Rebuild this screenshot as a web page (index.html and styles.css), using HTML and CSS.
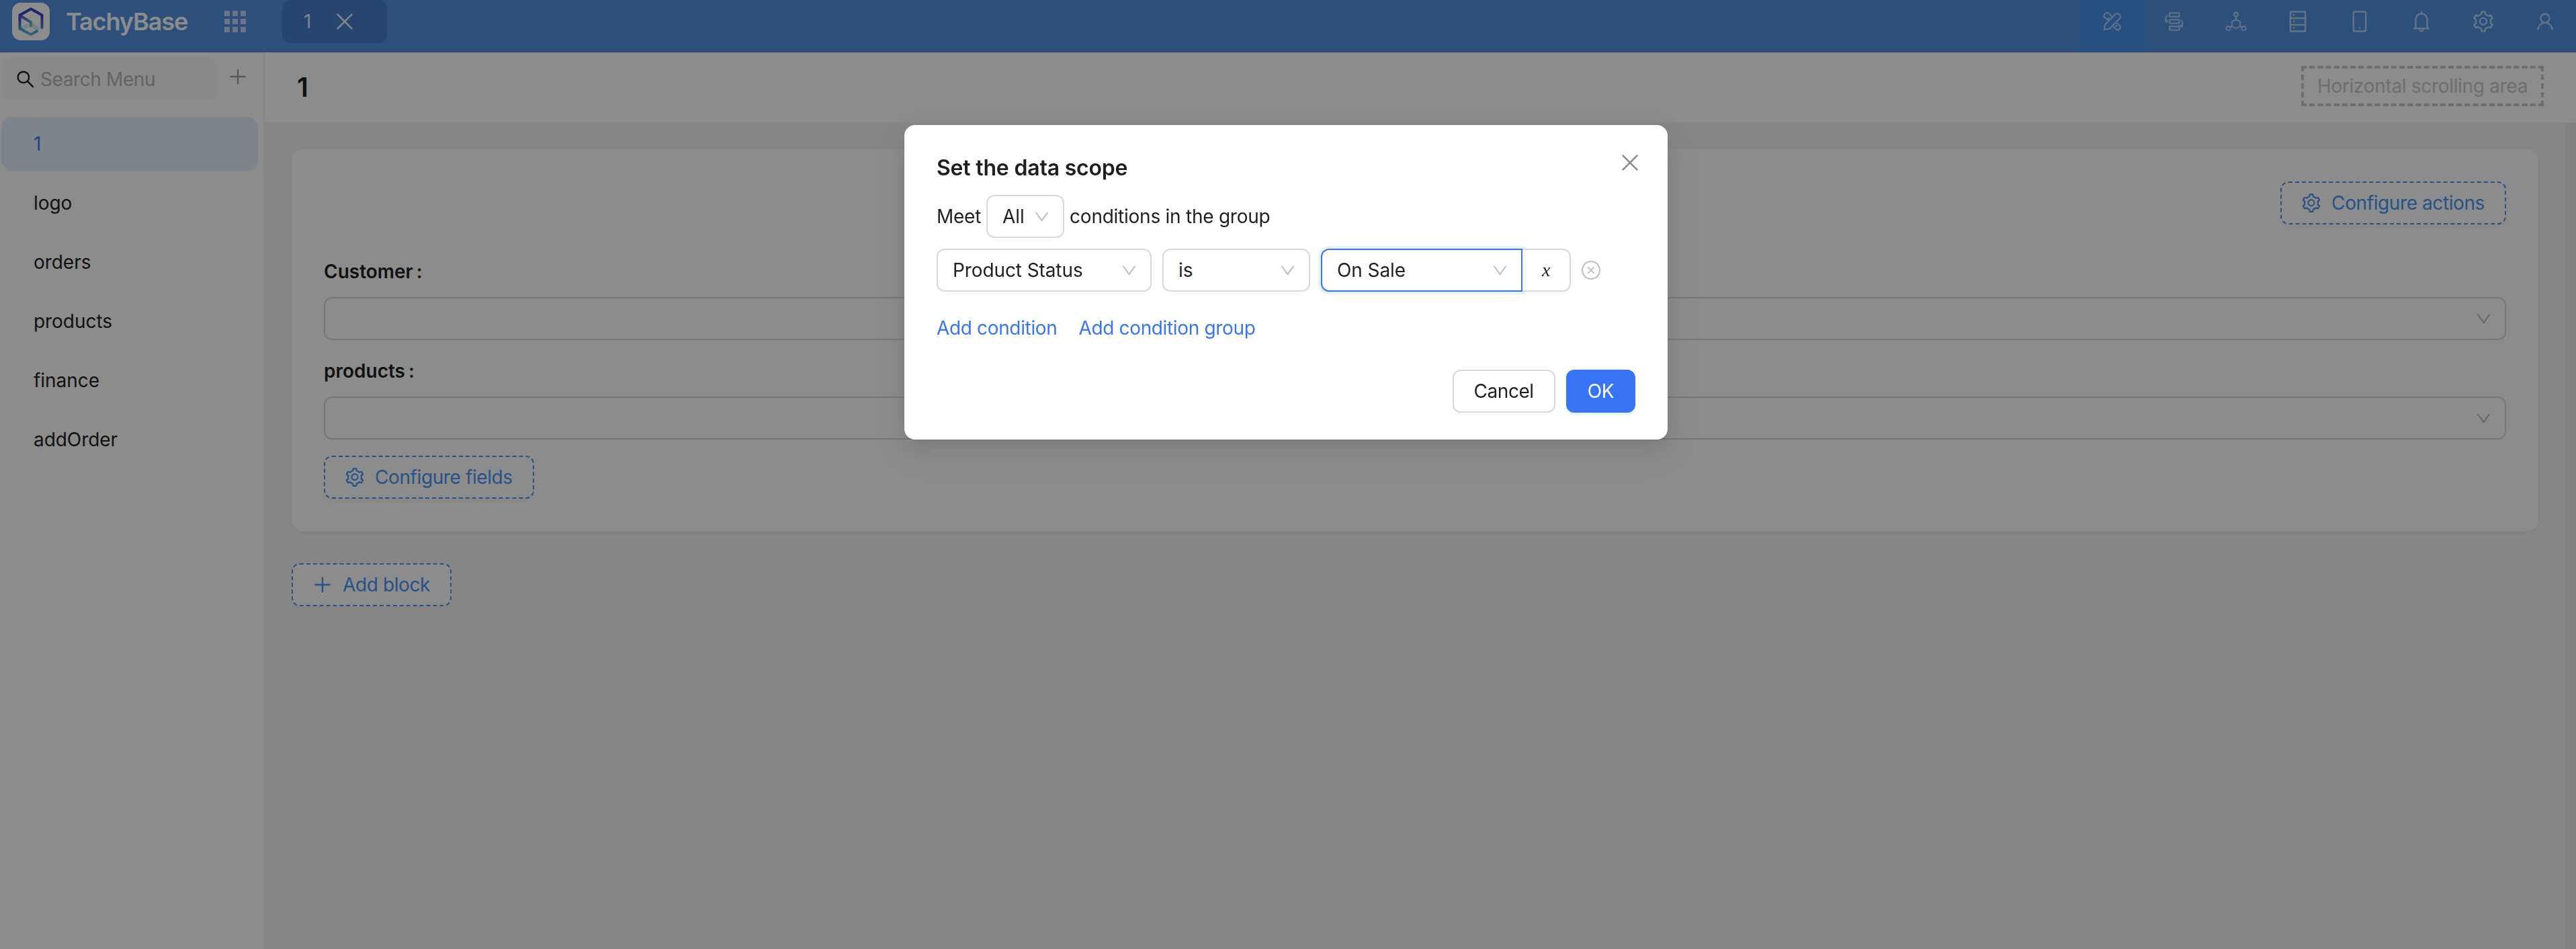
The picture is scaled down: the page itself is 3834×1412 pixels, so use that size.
FILE: index.html
```html
<!DOCTYPE html>
<html lang="en">
<head>
<meta charset="utf-8">
<title>TachyBase</title>
<link rel="stylesheet" href="styles.css">
</head>
<body>
<svg class="sprite" aria-hidden="true">
  <symbol id="i-down" viewBox="0 0 1024 1024"><path d="M884 256h-75c-5.1 0-9.9 2.5-12.9 6.6L512 654.2 227.9 262.6c-3-4.1-7.8-6.6-12.9-6.6h-75c-6.5 0-10.3 7.4-6.5 12.7l352.6 486.1c12.8 17.6 39 17.6 51.7 0l352.6-486.1c3.9-5.3.1-12.7-6.4-12.7z"/></symbol>
  <symbol id="i-plus" viewBox="0 0 1024 1024"><path d="M482 152h60q8 0 8 8v704q0 8-8 8h-60q-8 0-8-8V160q0-8 8-8z"/><path d="M152 474h720q8 0 8 8v60q0 8-8 8H152q-8 0-8-8v-60q0-8 8-8z"/></symbol>
  <symbol id="i-close" viewBox="0 0 1024 1024"><path d="M195 195l634 634M829 195L195 829" fill="none" stroke="currentColor" stroke-width="76"/></symbol>
  <symbol id="i-search" viewBox="0 0 1024 1024"><path d="M909.6 854.5L649.9 594.8C690.2 542.7 712 479 712 412c0-80.2-31.3-155.4-87.9-212.1-56.6-56.7-132-87.9-212.1-87.9s-155.5 31.3-212.1 87.9C143.2 256.5 112 331.8 112 412c0 80.1 31.3 155.5 87.9 212.1C256.5 680.8 331.8 712 412 712c67 0 130.6-21.8 182.7-62l259.7 259.6a8.2 8.2 0 0011.6 0l43.6-43.5a8.2 8.2 0 000-11.6zM570.4 570.4C528 612.7 471.8 636 412 636s-116-23.3-158.4-65.6C211.3 528 188 471.8 188 412s23.3-116.1 65.6-158.4C296 211.3 352.2 188 412 188s116.1 23.2 158.4 65.6S636 352.2 636 412s-23.3 116.1-65.6 158.4z"/></symbol>
  <symbol id="i-setting" viewBox="0 0 1024 1024"><path d="M924.8 625.7l-65.5-56c3.1-19 4.7-38.4 4.7-57.8s-1.6-38.8-4.7-57.8l65.5-56a32.03 32.03 0 009.3-35.2l-.9-2.6a443.74 443.74 0 00-79.7-137.9l-1.8-2.1a32.12 32.12 0 00-35.1-9.5l-81.3 28.9c-30-24.6-63.5-44-99.7-57.6l-15.7-85a32.05 32.05 0 00-25.8-25.7l-2.7-.5c-52.1-9.4-106.9-9.4-159 0l-2.7.5a32.05 32.05 0 00-25.8 25.7l-15.8 85.4a351.86 351.86 0 00-99 57.4l-81.9-29.1a32 32 0 00-35.1 9.5l-1.8 2.1a446.02 446.02 0 00-79.7 137.9l-.9 2.6c-4.5 12.5-.8 26.5 9.3 35.2l66.3 56.6c-3.1 18.8-4.6 38-4.6 57.1 0 19.2 1.5 38.4 4.6 57.1L99 625.5a32.03 32.03 0 00-9.3 35.2l.9 2.6c18.1 50.4 44.9 96.9 79.7 137.9l1.8 2.1a32.12 32.12 0 0035.1 9.5l81.9-29.1c29.8 24.5 63.1 43.9 99 57.4l15.8 85.4a32.05 32.05 0 0025.8 25.7l2.7.5a449.4 449.4 0 00159 0l2.7-.5a32.05 32.05 0 0025.8-25.7l15.7-85a350 350 0 0099.7-57.6l81.3 28.9a32 32 0 0035.1-9.5l1.8-2.1c34.8-41.1 61.6-87.5 79.7-137.9l.9-2.6c4.5-12.3.8-26.3-9.3-35zM788.3 465.9c2.5 15.1 3.8 30.6 3.8 46.1s-1.3 31-3.8 46.1l-6.6 40.1 74.7 63.9a370.03 370.03 0 01-42.6 73.6L721 702.8l-31.4 25.8c-23.9 19.6-50.5 35-79.3 45.8l-38.1 14.3-17.9 97a377.5 377.5 0 01-85 0l-17.9-97.2-37.8-14.5c-28.5-10.8-55-26.2-78.7-45.7l-31.4-25.9-93.4 33.2c-17-22.9-31.2-47.6-42.6-73.6l75.5-64.5-6.5-40c-2.4-14.9-3.7-30.3-3.7-45.5 0-15.3 1.2-30.6 3.7-45.5l6.5-40-75.5-64.5c11.3-26.1 25.6-50.7 42.6-73.6l93.4 33.2 31.4-25.9c23.7-19.5 50.2-34.9 78.7-45.7l37.9-14.3 17.9-97.2c28.1-3.2 56.8-3.2 85 0l17.9 97 38.1 14.3c28.7 10.8 55.4 26.2 79.3 45.8l31.4 25.8 92.8-32.9c17 22.9 31.2 47.6 42.6 73.6L781.8 426l6.5 39.9zM512 326c-97.2 0-176 78.8-176 176s78.800 176 176 176 176-78.800 176-176-78.800-176-176-176zm79.200 255.200A111.600 111.600 0 01512 614c-29.900 0-58-11.700-79.200-32.800A111.600 111.600 0 01400 502c0-29.900 11.700-58 32.800-79.200C454 401.600 482.100 390 512 390c29.900 0 58 11.600 79.200 32.800A111.600 111.600 0 01624 502c0 29.900-11.700 58-32.800 79.200z"/></symbol>
</svg>

<div class="app">
  <header class="topbar">
    <div class="brand">
      <svg class="logo" viewBox="0 0 56 56">
        <defs>
          <linearGradient id="lg-hex" gradientUnits="userSpaceOnUse" x1="0" y1="8" x2="0" y2="49"><stop offset="0" stop-color="#2a48c4"/><stop offset=".35" stop-color="#4b3fc6"/><stop offset=".62" stop-color="#3f7fd0"/><stop offset="1" stop-color="#5cc6d6"/></linearGradient>
          <linearGradient id="lg-arm" gradientUnits="userSpaceOnUse" x1="12" y1="19" x2="28" y2="36"><stop offset="0" stop-color="#4b4fcc"/><stop offset="1" stop-color="#62cdd2"/></linearGradient>
        </defs>
        <rect width="56" height="56" rx="13" fill="#fff"/>
        <path d="M28 28l14 10-7 4-9-8-9 7-7-4z" fill="#62cdd2" opacity=".28"/>
        <path d="M38.500 41.500L28 47.500 11.500 38.500V18.500L28 9.300l16.500 9.200V39" stroke="url(#lg-hex)" stroke-width="4"/>
        <path d="M12 19.500l16 9.500v7.500" stroke="url(#lg-arm)" stroke-width="4"/>
      </svg>
      <span class="brand-name">TachyBase</span>
    </div>
    <svg class="apps" viewBox="0 0 32 32"><path d="M0 0h8v8H0zM12 0h8v8h-8zM24 0h8v8h-8zM0 12h8v8H0zM12 12h8v8h-8zM24 12h8v8h-8zM0 24h8v8H0zM12 24h8v8h-8zM24 24h8v8h-8z"/></svg>
    <div class="tab"><span>1</span><svg class="ic36"><use href="#i-close"/></svg></div>
    <nav class="tools">
      <a class="tool on"><svg class="ic28 line" viewBox="0 0 28 28"><path d="M1.800 26.200L3.300 18.300 18.600 3a3.400 3.400 0 014.800 0l1.600 1.600a3.400 3.400 0 010 4.800L9.700 24.700zM9.300 12.500L2.700 8.200a3.800 3.800 0 01-.6-5L4 1.900a3.800 3.800 0 015 .5l5 5.200M7.600 10.400l2.200-2.200M18.200 14l6.900 6.500a3.500 3.500 0 010 4.200l-1.400 1.200a3.500 3.500 0 01-4.400-.3l-5.200-5.500M18.500 21.600l2.400-2.400"/></svg></a>
      <a class="tool"><svg class="ic28 line" viewBox="0 0 28 28"><path d="M7 1.200h14.500v5.600H7zM7 21.200h14.500v5.600H7zM9.500 11.200H19a2.800 2.800 0 010 5.600H9.500a2.800 2.800 0 010-5.600zM4.500 5C.5 7 .5 11 2.500 14.500M.3 12.500l2.500 2.600 1.600-3.200M23.500 11.500c3.500 2 4 6.500 1.500 10M27 19.500l-2.500 2.800-1.500-3.600"/></svg></a>
      <a class="tool"><svg class="ic32 line" viewBox="0 0 32 32"><circle cx="16" cy="5.500" r="3"/><circle cx="4.500" cy="26" r="3"/><circle cx="27.500" cy="26" r="3"/><path d="M16 8.500v4.200M10.300 23l-3.200 1.700M21.700 23l3.200 1.700M16 12.800l6 3.400v6.800l-6 3.500-6-3.500v-6.800z"/></svg></a>
      <a class="tool"><svg class="ic36" viewBox="0 0 1024 1024"><path d="M832 64H192c-17.700 0-32 14.300-32 32v832c0 17.700 14.300 32 32 32h640c17.700 0 32-14.300 32-32V96c0-17.700-14.300-32-32-32zm-600 72h560v208H232V136zm560 480H232V408h560v208zm0 272H232V680h560v208zM304 240a40 40 0 1080 0 40 40 0 10-80 0zm0 272a40 40 0 1080 0 40 40 0 10-80 0zm0 272a40 40 0 1080 0 40 40 0 10-80 0z"/></svg></a>
      <a class="tool"><svg class="ic36" viewBox="0 0 1024 1024"><path d="M744 62H280c-35.300 0-64 28.700-64 64v768c0 35.300 28.700 64 64 64h464c35.300 0 64-28.700 64-64V126c0-35.300-28.700-64-64-64zm-8 824H288V134h448v752zM472 784a40 40 0 1080 0 40 40 0 10-80 0z"/></svg></a>
      <a class="tool"><svg class="ic36" viewBox="0 0 1024 1024"><path d="M816 768h-24V428c0-141.100-104.300-257.800-240-277.200V112c0-22.100-17.900-40-40-40s-40 17.900-40 40v38.800C336.300 170.200 232 286.900 232 428v340h-24c-17.700 0-32 14.300-32 32v32c0 4.400 3.600 8 8 8h216c0 61.800 50.200 112 112 112s112-50.200 112-112h216c4.400 0 8-3.600 8-8v-32c0-17.700-14.300-32-32-32zM512 888c-26.500 0-48-21.500-48-48h96c0 26.500-21.500 48-48 48zM304 768V428c0-55.600 21.600-107.800 60.900-147.100S456.400 220 512 220c55.600 0 107.800 21.600 147.100 60.900S720 372.400 720 428v340H304z"/></svg></a>
      <a class="tool"><svg class="ic36"><use href="#i-setting"/></svg></a>
      <a class="tool"><svg class="ic32" viewBox="0 0 1024 1024"><path d="M858.500 763.600a374 374 0 00-80.600-119.500 375.630 375.630 0 00-119.500-80.600c-.4-.2-.8-.3-1.200-.5C719.500 518 760 444.700 760 362c0-137-111-248-248-248S264 225 264 362c0 82.700 40.500 156 102.800 201.100-.4.2-.8.3-1.200.5-44.800 18.900-85 46-119.500 80.600a375.630 375.630 0 00-80.600 119.500A371.700 371.700 0 00136 901.800a8 8 0 008 8.200h60c4.400 0 7.900-3.500 8-7.800 2-77.200 33-149.500 87.800-204.300 56.700-56.700 132-87.900 212.200-87.900s155.500 31.200 212.200 87.900C779 752.700 810 825 812 902.200c.1 4.400 3.600 7.800 8 7.800h60a8 8 0 008-8.200c-1-47.800-10.900-94.300-29.500-138.200zM512 534c-45.900 0-89.100-17.900-121.600-50.400S340 407.900 340 362c0-45.900 17.900-89.100 50.400-121.600S466.100 190 512 190s89.100 17.900 121.600 50.400S684 316.100 684 362c0 45.900-17.900 89.100-50.400 121.600S557.900 534 512 534z"/></svg></a>
    </nav>
  </header>

  <div class="layout">
    <aside class="sidebar">
      <div class="search-row">
        <div class="search"><svg class="ic32"><use href="#i-search"/></svg><span class="ph">Search Menu</span></div>
        <svg class="ic32 add-menu"><use href="#i-plus"/></svg>
      </div>
      <ul class="menu">
        <li class="item active"><span>1</span></li>
        <li class="item"><span>logo</span></li>
        <li class="item"><span>orders</span></li>
        <li class="item"><span>products</span></li>
        <li class="item"><span>finance</span></li>
        <li class="item"><span>addOrder</span></li>
      </ul>
    </aside>

    <main class="main">
      <div class="page-head">
        <h1 class="page-title">1</h1>
        <div class="scroll-area"><span>Horizontal scrolling area</span></div>
      </div>
      <div class="scroller">
        <div class="content">
          <section class="card">
            <div class="actions"><button class="btn dashed"><svg class="ic32"><use href="#i-setting"/></svg><span>Configure actions</span></button></div>
            <div class="field">
              <div class="label"><span>Customer</span><span class="colon">:</span></div>
              <div class="select wide"><svg class="arrow"><use href="#i-down"/></svg></div>
            </div>
            <div class="field">
              <div class="label"><span>products</span><span class="colon">:</span></div>
              <div class="select wide"><svg class="arrow"><use href="#i-down"/></svg></div>
            </div>
            <button class="btn dashed"><svg class="ic32"><use href="#i-setting"/></svg><span>Configure fields</span></button>
          </section>
          <button class="btn dashed"><svg class="ic32"><use href="#i-plus"/></svg><span>Add block</span></button>
        </div>
        <div class="scroll-track"></div>
      </div>
    </main>
  </div>
</div>

<div class="mask">
  <div class="modal" role="dialog">
    <div class="modal-head"><h2 class="modal-title">Set the data scope</h2><svg class="ic36 modal-close"><use href="#i-close"/></svg></div>
    <div class="meet">
      <span>Meet</span>
      <div class="select all"><span>All</span><svg class="arrow"><use href="#i-down"/></svg></div>
      <span>conditions in the group</span>
    </div>
    <div class="cond">
      <div class="select prop"><span>Product Status</span><svg class="arrow"><use href="#i-down"/></svg></div>
      <div class="select op"><span>is</span><svg class="arrow"><use href="#i-down"/></svg></div>
      <div class="value">
        <div class="select focus"><span>On Sale</span><svg class="arrow"><use href="#i-down"/></svg></div>
        <button class="btn var">x</button>
      </div>
      <svg class="remove" viewBox="0 0 28 28"><circle cx="14" cy="14" r="13"/><path d="M9.300 9.300l9.400 9.400M18.700 9.300l-9.400 9.400"/></svg>
    </div>
    <div class="links"><a>Add condition</a><a>Add condition group</a></div>
    <div class="modal-foot"><button class="btn"><span>Cancel</span></button><button class="btn primary"><span>OK</span></button></div>
  </div>
</div>
</body>
</html>
```
FILE: styles.css
```css
* { box-sizing: border-box; }
html, body { margin: 0; height: 100%; overflow: hidden; }
body { font: 28px/44px Inter, "Liberation Sans", sans-serif; color: #1f1f1f; background: #fff; }
svg { display: block; flex: none; fill: currentColor; }
.sprite { position: absolute; width: 0; height: 0; }
.ic28 { width: 28px; height: 28px; }
.ic32 { width: 32px; height: 32px; }
.ic36 { width: 36px; height: 36px; }
.arrow { width: 27px; height: 27px; }
.line { fill: none; stroke: currentColor; stroke-width: 2; stroke-linejoin: round; }

.app { height: 100%; display: flex; flex-direction: column; }
.topbar { height: 78px; flex: none; display: flex; align-items: flex-start; background: #5090e2; }
.brand { width: 334px; height: 64px; padding-left: 18px; display: flex; align-items: center; gap: 24px; }
.logo { width: 56px; height: 56px; fill: none; }
.brand-name { font-size: 36px; font-weight: 600; letter-spacing: -1.1px; color: #fff; }
.apps { width: 32px; height: 32px; margin-top: 16px; color: rgba(255, 255, 255, .65); }
.tab { width: 156px; height: 64px; margin-left: 54px; padding-left: 32px; border-radius: 12px; display: flex; align-items: center; gap: 32px; background: #4880cb; color: rgba(255, 255, 255, .88); }
.tools { display: flex; margin-left: auto; }
.tool { width: 92px; height: 78px; padding-bottom: 14px; display: flex; align-items: center; justify-content: center; color: rgba(255, 255, 255, .58); }
.tool.on { background: #4892ea; }

.layout { flex: 1; display: flex; min-height: 0; }
.sidebar { width: 394px; flex: none; border-right: 2px solid #f0f0f0; padding: 8px 8px 0 2px; }
.search-row { display: flex; align-items: flex-start; gap: 14px; }
.search { width: 322px; height: 64px; padding-left: 20px; border-radius: 16px; background: #fafafa; display: flex; align-items: center; gap: 6px; letter-spacing: -.4px; }
.ph { color: #b5b5b5; }
.add-menu { margin-top: 12px; color: #a3a3a3; }
.menu { list-style: none; margin: 24px 0 0; padding: 0; display: flex; flex-direction: column; gap: 8px; }
.item { height: 80px; padding-left: 48px; border-radius: 16px; display: flex; align-items: center; letter-spacing: -.05px; }
.item.active { background: #e6f1ff; color: #3875f6; }

.main { flex: 1; min-width: 0; display: flex; flex-direction: column; }
.page-head { height: 104px; flex: none; padding: 0 48px; display: flex; align-items: center; justify-content: space-between; }
.page-title { margin: 0; font-size: 40px; font-weight: 600; }
.scroll-area { width: 361px; height: 60px; border: 4px dashed #c9c9c9; color: #c9c9c9; display: flex; align-items: center; justify-content: center; margin-bottom: 4px; letter-spacing: -.32px; }
.scroller { flex: 1; display: flex; background: #f5f5f5; }
.content { flex: 1; padding: 40px; }
.scroll-track { width: 16px; background: #ececec; }
.card { border-radius: 16px; background: #fff; padding: 48px; margin-bottom: 48px; box-shadow: 0 2px 4px rgba(0, 0, 0, .03), 0 2px 12px -2px rgba(0, 0, 0, .02), 0 4px 8px rgba(0, 0, 0, .02); }
.actions { display: flex; justify-content: flex-end; margin-bottom: 48px; }
.field { margin-bottom: 24px; }
.label { font-weight: 600; margin-bottom: 16px; display: flex; gap: 5px; }

.btn { height: 64px; padding: 0 30px; border: 2px solid #d9d9d9; border-radius: 12px; background: #fff; color: #1f1f1f; font: inherit; letter-spacing: -.45px; display: inline-flex; align-items: center; justify-content: center; gap: 14px; box-shadow: 0 4px 0 rgba(0, 0, 0, .02); vertical-align: top; }
.btn.dashed { border: 2px dashed #4696f7; color: #4696f7; padding-left: 28px; letter-spacing: -.4px; }
.btn.primary { background: #3875f6; border-color: #3875f6; color: #fff; box-shadow: 0 4px 0 rgba(5, 145, 255, .1); }
.select { height: 64px; padding: 0 18px 0 22px; border: 2px solid #d9d9d9; border-radius: 12px; background: #fff; display: flex; align-items: center; justify-content: space-between; letter-spacing: -.1px; }
.select svg { color: #bfbfbf; }
.select.wide { justify-content: flex-end; }

.mask { position: fixed; inset: 0; background: rgba(0, 0, 0, .45); }
.modal { width: 1136px; height: 468px; margin: 186px 0 0 1346px; padding: 40px 48px; border-radius: 16px; background: #fff; box-shadow: 0 12px 32px rgba(0, 0, 0, .08), 0 6px 12px -8px rgba(0, 0, 0, .12), 0 18px 56px 16px rgba(0, 0, 0, .05); }
.modal-head { display: flex; justify-content: space-between; align-items: flex-start; margin-bottom: 16px; }
.modal-title { margin: 0; font-size: 32px; line-height: 48px; font-weight: 600; letter-spacing: -.2px; }
.modal-close { color: #8c8c8c; margin: -2px -10px 0 0; }
.meet, .cond { display: flex; align-items: center; gap: 8px; margin-bottom: 16px; }
.meet { letter-spacing: -.25px; }
.select.all { width: 116px; }
.cond { gap: 16px; }
.select.prop { width: 320px; }
.select.op { width: 220px; }
.value { display: flex; }
.select.focus { width: 300px; border-color: #3875f6; border-radius: 12px 0 0 12px; box-shadow: 0 0 0 4px rgba(5, 145, 255, .1); }
.btn.var { width: 72px; border-left: 0; padding: 0; border-radius: 0 12px 12px 0; font: italic 28px/44px "Liberation Serif", serif; }
.remove { width: 28px; height: 28px; fill: none; stroke: #bfbfbf; stroke-width: 2; }
.links { display: flex; gap: 32px; margin-top: 32px; color: #3875f6; letter-spacing: -.35px; }
.modal-foot { display: flex; justify-content: flex-end; gap: 16px; margin-top: 40px; }
```
